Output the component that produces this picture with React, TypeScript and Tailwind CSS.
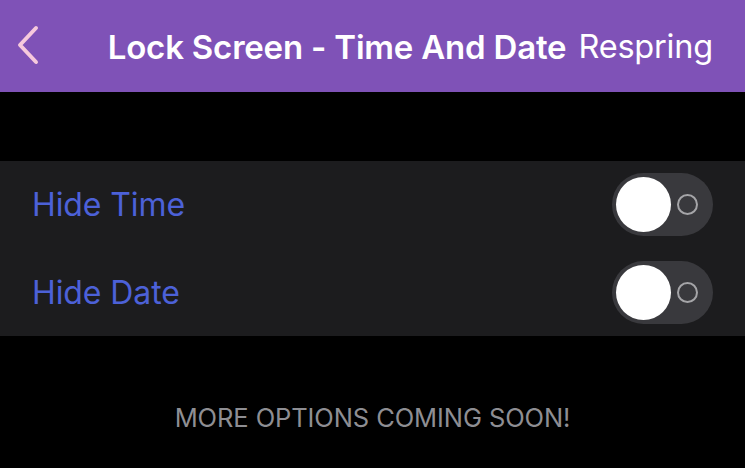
import React, { useState } from 'react';

const Toggle: React.FC<{ on: boolean; onChange: () => void }> = ({ on, onChange }) => (
  <button
    onClick={onChange}
    className="relative w-[101px] h-[63px] rounded-full bg-[#39393d] flex items-center shrink-0"
  >
    <span className={`absolute top-[4px] h-[55px] w-[55px] rounded-full bg-white ${on ? 'left-[42px]' : 'left-[4px]'}`} />
    <span className="absolute right-[15px] top-[21px] h-[21px] w-[21px] rounded-full border-[2px] border-[#a5a5a8]" />
  </button>
);

export default function App() {
  const [hideTime, setHideTime] = useState(false);
  const [hideDate, setHideDate] = useState(false);

  const rows = [
    { label: 'Hide Time', on: hideTime, set: () => setHideTime(!hideTime) },
    { label: 'Hide Date', on: hideDate, set: () => setHideDate(!hideDate) },
  ];

  return (
    <div
      className="w-[745px] h-[468px] bg-black overflow-hidden"
      style={{ fontFamily: 'Inter, "Noto Sans", sans-serif' }}
    >
      {/* nav bar */}
      <div className="h-[92px] bg-[#7f52b7] flex items-center pl-[15px] pr-[32px]">
        <svg width="26" height="40" viewBox="0 0 26 40" className="mt-[-2px]">
          <path d="M21 3 L5 20 L21 37" fill="none" stroke="#f6c9dc" strokeWidth="4" strokeLinecap="round" strokeLinejoin="round" />
        </svg>
        <div className="flex-1 flex items-center justify-end gap-[12px] pt-[3px]">
          <span className="text-white text-[33px] font-semibold tracking-[-0.2px]">Lock Screen - Time And Date</span>
          <span className="text-white text-[32.5px] tracking-[-0.2px]">Respring</span>
        </div>
      </div>

      {/* settings group */}
      <div className="mt-[69px] bg-[#1c1c1e]">
        {rows.map((r) => (
          <div key={r.label} className="h-[87.5px] flex items-center justify-between pl-[32px] pr-[32px]">
            <span className="text-[#4c61d8] text-[32px] tracking-[-0.1px] pt-[1px]">{r.label}</span>
            <Toggle on={r.on} onChange={r.set} />
          </div>
        ))}
      </div>

      <div className="mt-[63px] text-center text-[#8e8e93] text-[25.5px] tracking-[-0.1px]">
        MORE OPTIONS COMING SOON!
      </div>
    </div>
  );
}
